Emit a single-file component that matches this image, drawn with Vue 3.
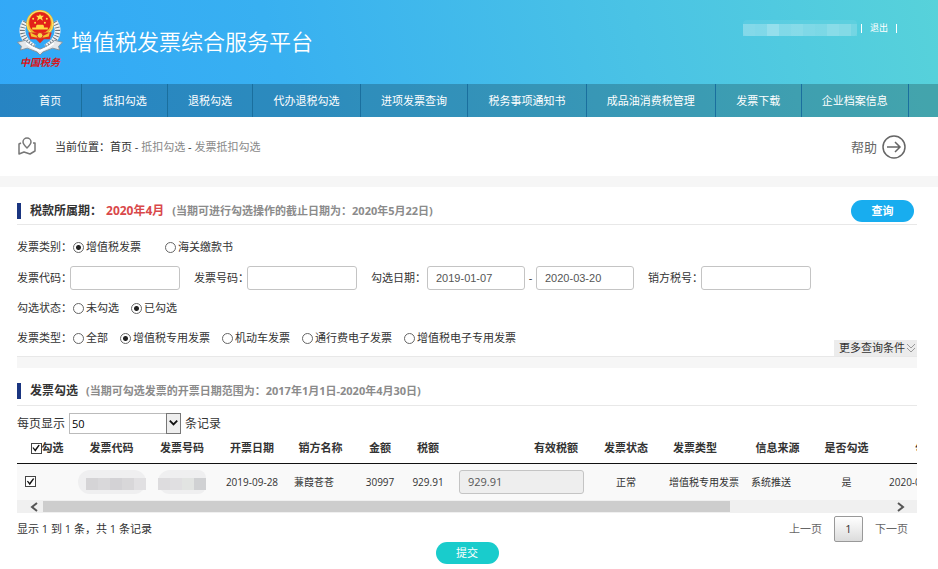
<script setup>
import { ref } from 'vue'

const navItems = ['首页', '抵扣勾选', '退税勾选', '代办退税勾选', '进项发票查询', '税务事项通知书', '成品油消费税管理', '发票下载', '企业档案信息']

const userMask = [0.26, 0.24, 0.36, 0.24, 0.27, 0.22, 0.2, 0.28, 0.24, 0.14]
const codeMask = ['#d5d4d6', '#d9d8da', '#d3d2d5', '#d8d7d9', '#e1e0e2']
const numberMask = ['#dddcde', '#e0dfe1', '#e2e4e2', '#d0d1d3']

const category = ref('vat')
const categories = [
  { value: 'vat', label: '增值税发票' },
  { value: 'customs', label: '海关缴款书' },
]
const status = ref('done')
const statuses = [
  { value: 'todo', label: '未勾选' },
  { value: 'done', label: '已勾选' },
]
const kind = ref('special')
const kinds = [
  { value: 'all', label: '全部' },
  { value: 'special', label: '增值税专用发票' },
  { value: 'vehicle', label: '机动车发票' },
  { value: 'toll', label: '通行费电子发票' },
  { value: 'especial', label: '增值税电子专用发票' },
]

const invoiceCode = ref('')
const invoiceNumber = ref('')
const dateFrom = ref('2019-01-07')
const dateTo = ref('2020-03-20')
const sellerTaxNo = ref('')
const pageSize = ref('50')
const allChecked = ref(true)
const rowChecked = ref(true)
const effectiveTax = ref('929.91')

const columnWidths = [60, 69, 72, 68, 69, 50, 46, 140, 70, 82, 69, 69, 112]
</script>

<template>
  <div class="page">
    <header class="top">
      <div class="banner">
        <div class="brand">
          <div class="logo">
            <svg class="emblem" viewBox="0 0 46 46" aria-hidden="true">
              <g fill="none" stroke="#f1f3f5" stroke-width="6">
                <path d="M8 12C2 21 5 31 17 38" />
                <path d="M38 12C44 21 41 31 29 38" />
              </g>
              <g fill="none" stroke="#68757f" stroke-width="5" stroke-dasharray="1 2">
                <path d="M8 12C2 21 5 31 17 38" />
                <path d="M38 12C44 21 41 31 29 38" />
              </g>
              <path d="M0 33L8 31C13 36 17 38 23 40C29 38 33 36 38 31L46 33L42 37L43 41L36 39L26 43L23 46L20 43L10 39L3 41L4 37Z" fill="#e4e7ea" stroke="#84919c" stroke-width="1" />
              <path d="M9 34C15 39 19 40 23 42C27 40 31 39 37 34" fill="none" stroke="#fff" stroke-width="2" />
              <circle cx="23" cy="14" r="14" fill="#eeba2b" />
              <circle cx="23" cy="14" r="13" fill="none" stroke="#ffe27a" stroke-width="1" />
              <path d="M11 23H35L33 30H27L23 34L19 30H13Z" fill="#dd2a1f" />
              <circle cx="23" cy="13" r="11" fill="#e32119" />
              <path d="M23 4L24 6H27L25 8L26 11L23 9L20 11L21 8L19 6H22Z" fill="#ffe34b" />
              <g fill="#ffe34b">
                <circle cx="16" cy="9" r="1" /><circle cx="30" cy="9" r="1" />
                <circle cx="18" cy="13" r="1" /><circle cx="28" cy="13" r="1" />
              </g>
              <path d="M19 16L20 15H26L27 16V18H31V20H15V18H19Z" fill="#ffd942" />
              <path d="M13 23L19 26H27L33 23L32 27L27 28H19L14 27Z" fill="#f6c431" />
              <circle cx="23" cy="26" r="3" fill="#f9d64a" stroke="#dd2a1f" />
            </svg>
            <span class="logo-text">中国税务</span>
          </div>
          <h1>增值税发票综合服务平台</h1>
        </div>
        <div class="account">
          <span class="user-mask">
            <i v-for="(alpha, i) in userMask" :key="i" :style="{ opacity: alpha }"></i>
          </span>
          <span class="bar"></span>
          <a href="#logout">退出</a>
          <span class="bar"></span>
        </div>
      </div>
      <nav class="nav">
        <a v-for="item in navItems" :key="item" href="#nav">{{ item }}</a>
      </nav>
    </header>

    <div class="crumbs">
      <svg class="map-icon" viewBox="0 0 20 20" aria-hidden="true">
        <path d="M4 6L2 7V17L7 15L13 17L18 14V6L16 6" />
        <path d="M10 11C7 8 6 7 6 5A4 4 0 0 1 14 5C14 7 13 8 10 11Z" />
      </svg>
      <p>当前位置：<a class="home" href="#home">首页</a> - <a href="#deduct">抵扣勾选</a> - <a href="#invoice">发票抵扣勾选</a></p>
      <a class="help" href="#help">
        帮助
        <svg viewBox="0 0 26 26" aria-hidden="true">
          <circle cx="13" cy="13" r="11" />
          <path d="M6 13H19M14 8L19 13L14 18" />
        </svg>
      </a>
    </div>

    <main>
      <section>
        <div class="heading">
          <h2>税款所属期：</h2>
          <strong class="period">2020年4月</strong>
          <span class="note">(当期可进行勾选操作的截止日期为：2020年5月22日)</span>
          <button class="pill search" type="button">查询</button>
        </div>

        <form class="filters" @submit.prevent>
          <div class="row wide" role="radiogroup" aria-label="发票类别">
            <span class="name">发票类别：</span>
            <label v-for="o in categories" :key="o.value" class="radio">
              <input v-model="category" type="radio" name="category" :value="o.value" />{{ o.label }}
            </label>
          </div>
          <div class="row fields">
            <div class="field">
              <label class="name" for="code">发票代码：</label>
              <input id="code" v-model="invoiceCode" class="box" type="text" />
            </div>
            <div class="field">
              <label class="name" for="number">发票号码：</label>
              <input id="number" v-model="invoiceNumber" class="box" type="text" />
            </div>
            <div class="field">
              <label class="name date-name" for="from">勾选日期：</label>
              <input id="from" v-model="dateFrom" class="box date" type="text" />
              <span class="dash">-</span>
              <input v-model="dateTo" class="box date" type="text" aria-label="勾选日期止" />
            </div>
            <div class="field">
              <label class="name" for="seller">销方税号：</label>
              <input id="seller" v-model="sellerTaxNo" class="box" type="text" />
            </div>
          </div>
          <div class="row" role="radiogroup" aria-label="勾选状态">
            <span class="name">勾选状态：</span>
            <label v-for="o in statuses" :key="o.value" class="radio">
              <input v-model="status" type="radio" name="status" :value="o.value" />{{ o.label }}
            </label>
          </div>
          <div class="row" role="radiogroup" aria-label="发票类型">
            <span class="name">发票类型：</span>
            <label v-for="o in kinds" :key="o.value" class="radio">
              <input v-model="kind" type="radio" name="kind" :value="o.value" />{{ o.label }}
            </label>
            <button class="more" type="button">
              更多查询条件
              <svg viewBox="0 0 8 9" aria-hidden="true"><path d="M0 0L4 4L8 0M0 4L4 8L8 4" /></svg>
            </button>
          </div>
        </form>
        <div class="strip"></div>
      </section>

      <section>
        <div class="heading second">
          <h2>发票勾选</h2>
          <span class="note">(当期可勾选发票的开票日期范围为：2017年1月1日-2020年4月30日)</span>
        </div>

        <div class="page-size">
          <label for="size">每页显示</label>
          <span class="select">
            <select id="size" v-model="pageSize">
              <option>50</option>
              <option>100</option>
            </select>
            <svg viewBox="0 0 14 20" aria-hidden="true"><path d="M3 7L7 11L11 7" /></svg>
          </span>
          <span>条记录</span>
        </div>

        <div class="table-wrap">
          <table>
            <colgroup>
              <col v-for="(w, i) in columnWidths" :key="i" :style="{ width: w + 'px' }" />
            </colgroup>
            <thead>
              <tr>
                <th><label class="check-all"><input v-model="allChecked" class="check" type="checkbox" />勾选</label></th>
                <th>发票代码</th>
                <th>发票号码</th>
                <th>开票日期</th>
                <th>销方名称</th>
                <th>金额</th>
                <th>税额</th>
                <th class="right">有效税额</th>
                <th>发票状态</th>
                <th class="kind-head">发票类型</th>
                <th>信息来源</th>
                <th>是否勾选</th>
                <th>勾选时间</th>
              </tr>
            </thead>
            <tbody>
              <tr>
                <td class="left"><input v-model="rowChecked" class="check" type="checkbox" aria-label="勾选" /></td>
                <td><span class="mask code"><i v-for="(c, i) in codeMask" :key="i" :style="{ background: c }"></i></span></td>
                <td><span class="mask"><i v-for="(c, i) in numberMask" :key="i" :style="{ background: c }"></i></span></td>
                <td>2019-09-28</td>
                <td class="left">蒹葭苍苍</td>
                <td>30997</td>
                <td>929.91</td>
                <td class="left"><input v-model="effectiveTax" class="box tax" type="text" readonly aria-label="有效税额" /></td>
                <td>正常</td>
                <td class="left">增值税专用发票</td>
                <td class="left">系统推送</td>
                <td>是</td>
                <td class="left">2020-04-15</td>
              </tr>
            </tbody>
          </table>
        </div>
        <div class="scrollbar">
          <button type="button" aria-label="向左滚动"><svg viewBox="0 0 8 10"><path d="M7 1L2 5L7 9" /></svg></button>
          <div class="track"><div class="thumb"></div></div>
          <button type="button" aria-label="向右滚动"><svg viewBox="0 0 8 10"><path d="M1 1L6 5L1 9" /></svg></button>
        </div>

        <div class="footer">
          <p>显示 1 到 1 条，共 1 条记录</p>
          <div class="pager">
            <a href="#prev">上一页</a>
            <button type="button">1</button>
            <a href="#next">下一页</a>
          </div>
        </div>
        <div class="submit-row">
          <button class="pill submit" type="button">提交</button>
        </div>
      </section>
    </main>
  </div>
</template>

<style>
body {
  background: #fff;
}
</style>

<style scoped>
.page {
  font: 11px/16px "Open Sans", "Noto Sans CJK SC", sans-serif;
  color: #333;
}
* {
  box-sizing: border-box;
}
h1, h2, p {
  margin: 0;
}
a {
  color: inherit;
  text-decoration: none;
}
button, input, select {
  font: inherit;
  color: inherit;
  margin: 0;
}
svg {
  display: block;
  fill: none;
}

.top {
  background: linear-gradient(75deg, #32a8f8 0%, #38b0f1 30%, #4ac3e5 68%, #57d2da 100%);
  color: #fff;
}
.banner {
  display: flex;
  justify-content: space-between;
  align-items: flex-start;
  height: 84px;
  padding: 10px 41px 0 17px;
}
.brand {
  display: flex;
  gap: 8px;
}
.logo {
  display: flex;
  flex-direction: column;
  align-items: center;
  width: 46px;
}
.emblem {
  width: 46px;
  height: 45px;
}
.logo-text {
  font: italic 700 10px/14px "Noto Sans CJK SC", sans-serif;
  color: #d81417;
}
h1 {
  padding-top: 15px;
  font-size: 22px;
  line-height: 32px;
  font-weight: 350;
}
.account {
  display: flex;
  align-items: center;
  gap: 8px;
  padding-top: 10px;
  font-size: 9px;
}
.user-mask {
  display: flex;
  height: 16px;
  padding-top: 4px;
  background: rgba(255, 255, 255, 0.06);
  border-radius: 4px;
  margin-right: -4px;
}
.user-mask i {
  width: 12px;
  background: #fff;
}
.user-mask i:last-child {
  width: 6px;
}
.bar {
  width: 1px;
  height: 9px;
  background: #fff;
}
.nav {
  display: flex;
  padding: 0 29px 0 19px;
  background: rgba(0, 0, 0, 0.21);
}
.nav a {
  flex: 1 1 auto;
  padding: 0 20px;
  border-right: 1px solid #1a6f9e;
  line-height: 33px;
  text-align: center;
  white-space: nowrap;
}

.crumbs {
  display: flex;
  align-items: center;
  height: 70px;
  padding: 0 31px 0 17px;
  border-bottom: 11px solid #f6f6f6;
}
.map-icon {
  width: 20px;
  height: 20px;
  margin-right: 18px;
  stroke: #777;
  stroke-width: 1.5;
  stroke-linejoin: round;
}
.crumbs p a {
  color: #888;
}
.crumbs p .home {
  color: #333;
}
.help {
  display: flex;
  align-items: center;
  gap: 4px;
  margin-left: auto;
  font-size: 13px;
  color: #666;
}
.help svg {
  width: 26px;
  height: 26px;
  stroke: #666;
  stroke-width: 1.5;
}

main {
  padding: 0 21px 0 17px;
}
.heading {
  display: flex;
  align-items: center;
  height: 38px;
  padding-top: 10px;
  border-bottom: 1px solid #e8e8e8;
}
h2 {
  padding-left: 9px;
  border-left: 4px solid #1a3580;
  font-size: 12px;
  line-height: 16px;
}
.period {
  margin-left: 4px;
  font-size: 12px;
  color: #d9484a;
}
.note {
  margin-left: 8px;
  font-weight: 700;
  color: #8b8b8b;
}
.pill {
  width: 63px;
  height: 22px;
  padding: 0;
  border: 0;
  border-radius: 11px;
  color: #fff;
  line-height: 22px;
}
.search {
  margin: 0 3px 0 auto;
  background: #18adef;
  font-weight: 700;
}

.filters {
  padding-top: 14px;
}
.row {
  display: flex;
  align-items: center;
  height: 16px;
  gap: 12px;
}
.row + .row {
  margin-top: 14px;
}
.row.wide {
  gap: 24px;
}
.row.fields {
  height: 24px;
  gap: 14px;
  margin: 11px 0 10px;
}
.fields + .row {
  margin-top: 0;
}
.name {
  flex: none;
  width: 53px;
  white-space: nowrap;
}
.row > .name {
  margin-right: -9px;
}
.wide > .name {
  margin-right: -21px;
}
.date-name {
  width: 56px;
}
.field {
  display: flex;
  align-items: center;
}
.radio {
  display: flex;
  align-items: center;
  gap: 2px;
  white-space: nowrap;
}
.radio input {
  appearance: none;
  width: 11px;
  height: 11px;
  border: 1px solid #666;
  border-radius: 50%;
  background: #fff;
}
.radio input:checked {
  background: radial-gradient(circle, #222 0 2px, #fff 3px);
}
.box {
  width: 110px;
  height: 24px;
  padding: 0 8px;
  border: 1px solid #c4c4c4;
  border-radius: 3px;
  background: #fff;
  color: #555;
}
.date {
  width: 98px;
  font-family: "Liberation Sans", sans-serif;
}
.dash {
  width: 11px;
  text-align: center;
}
.more {
  display: flex;
  align-items: center;
  align-self: flex-end;
  gap: 2px;
  height: 16px;
  margin: 0 0 -10px auto;
  padding: 0 2px 0 5px;
  border: 0;
  background: #ececec;
  white-space: nowrap;
}
.more svg {
  width: 8px;
  height: 9px;
  stroke: #999;
}
.strip {
  height: 12px;
  margin-top: 10px;
  border-top: 1px solid #e8e8e8;
  background: #f6f6f6;
}

.heading.second {
  padding-top: 8px;
}
.page-size {
  display: flex;
  align-items: center;
  gap: 4px;
  padding-top: 7px;
  font-size: 12px;
}
.select {
  display: grid;
}
.select > * {
  grid-area: 1 / 1;
}
.select select {
  appearance: none;
  width: 112px;
  height: 21px;
  padding: 0 2px;
  border: 1px solid #bbb;
  border-radius: 0;
  background: #fff;
  color: #000;
  font-size: 11px;
}
.select svg {
  justify-self: end;
  width: 15px;
  height: 21px;
  border: 1px solid #777;
  background: #eee;
  stroke: #111;
  stroke-width: 2;
  pointer-events: none;
}

.table-wrap {
  overflow: hidden;
}
table {
  width: 976px;
  table-layout: fixed;
  border-collapse: collapse;
}
th {
  height: 29px;
  padding: 0;
  border-bottom: 1px solid #111;
  white-space: nowrap;
}
td {
  height: 37px;
  padding: 0;
  background: #f9f9f9;
  font-size: 10px;
  text-align: center;
  white-space: nowrap;
}
td.left {
  padding-left: 8px;
  text-align: left;
}
th.right {
  padding-right: 13px;
  text-align: right;
}
.kind-head {
  padding-right: 14px;
}
.check-all {
  display: flex;
  align-items: center;
  justify-content: center;
}
.check {
  appearance: none;
  display: grid;
  place-items: center;
  width: 11px;
  height: 11px;
  border: 1px solid #444;
  background: #fff;
}
.check:checked::before {
  content: "";
  width: 9px;
  height: 9px;
  background: #111;
  clip-path: polygon(10% 45%, 22% 38%, 40% 60%, 78% 10%, 92% 18%, 42% 88%);
}
.tax {
  display: block;
  width: 125px;
  background: #eee;
  font-size: 11px;
}
.mask {
  display: flex;
  width: 48px;
  height: 24px;
  margin: 0 auto;
  padding: 8px 0 4px;
  border-radius: 12px 8px 8px 12px;
  background: #efeff0;
}
.mask.code {
  width: 68px;
  padding-left: 8px;
  border-radius: 12px;
}
.mask i {
  width: 12px;
}

.scrollbar {
  display: flex;
  height: 13px;
  background: #f0f0f0;
}
.scrollbar button {
  display: grid;
  place-items: center;
  width: 26px;
  padding: 0 0 0 8px;
  border: 0;
  background: none;
}
.scrollbar button:last-child {
  padding: 0 6px 0 0;
}
.scrollbar svg {
  width: 8px;
  height: 10px;
  stroke: #555;
  stroke-width: 2;
}
.track {
  flex: 1;
  padding: 1px 0;
}
.thumb {
  width: 81%;
  height: 11px;
  background: #cdcdcd;
}

.footer {
  display: flex;
  justify-content: space-between;
  align-items: center;
  padding: 3px 9px 0 0;
}
.pager {
  display: flex;
  align-items: center;
  gap: 12px;
  color: #666;
}
.pager button {
  width: 29px;
  height: 26px;
  padding: 0;
  border: 1px solid #999;
  border-radius: 2px;
  background: linear-gradient(#fff, #dcdcdc);
  color: #333;
}
.submit-row {
  display: flex;
  justify-content: center;
  padding-bottom: 5px;
}
.submit {
  background: #19cccc;
}
</style>
